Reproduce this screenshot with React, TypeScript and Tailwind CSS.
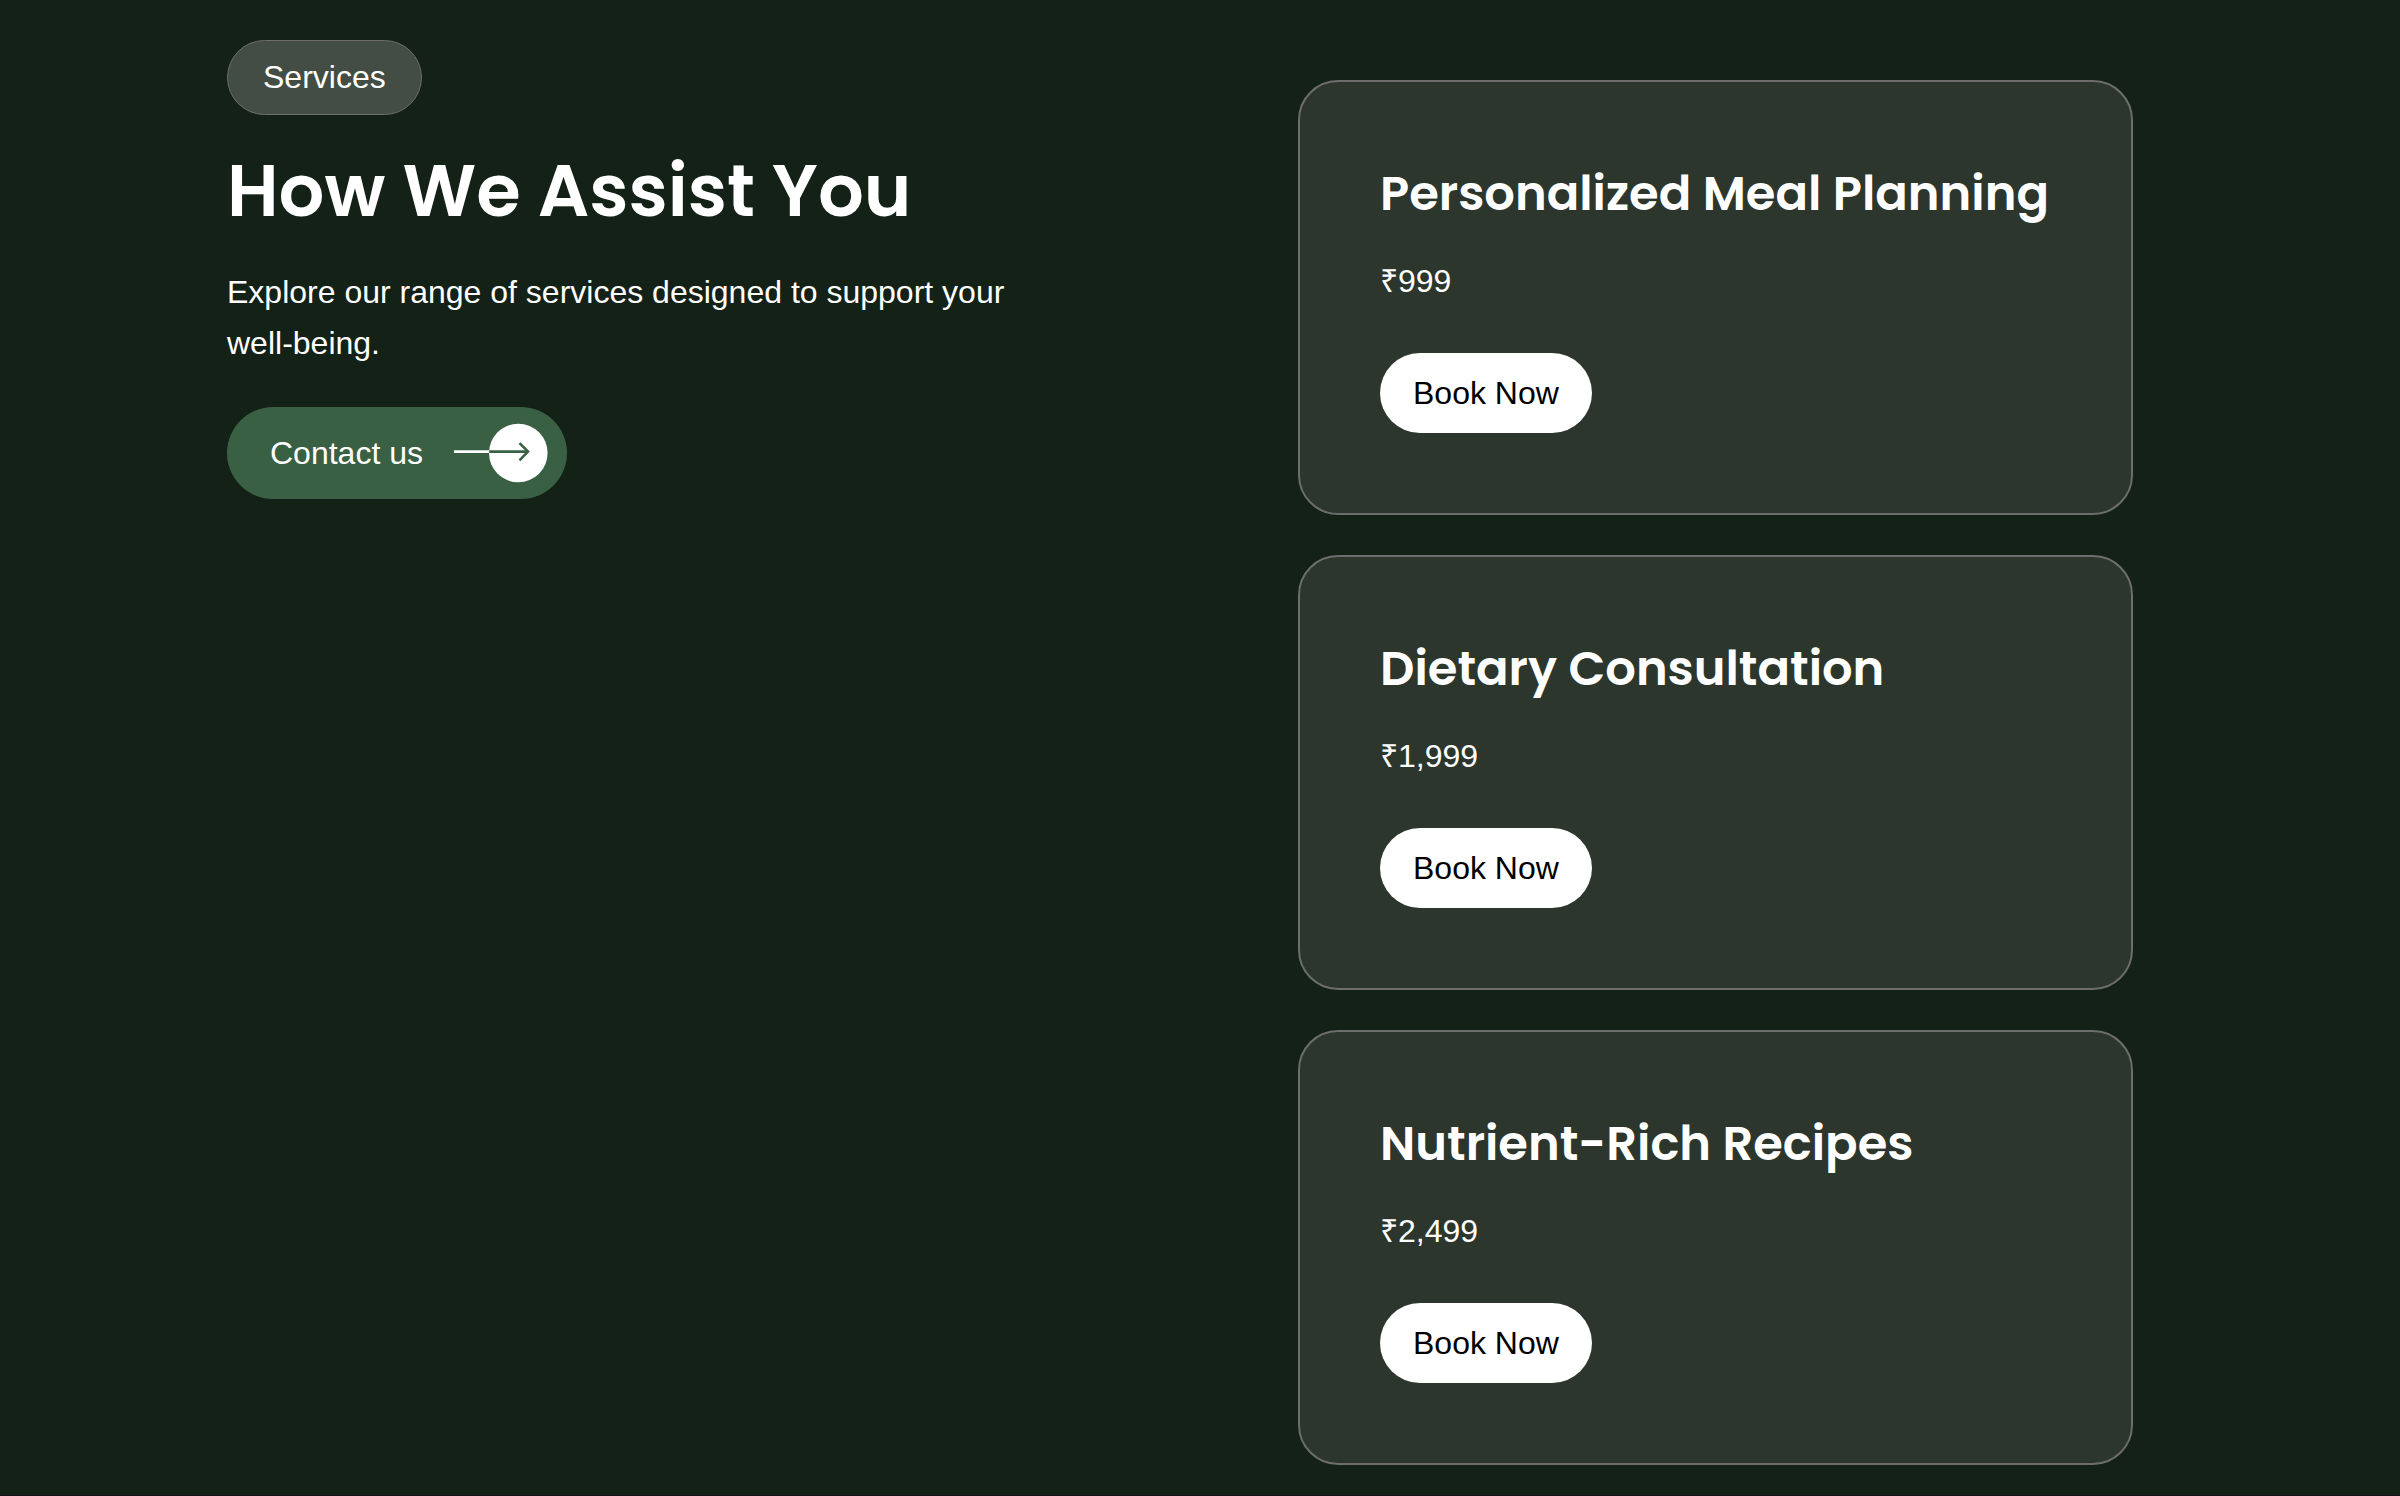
type Service = { name: string; price: string };

const services: Service[] = [
  { name: "Personalized Meal Planning", price: "₹999" },
  { name: "Dietary Consultation", price: "₹1,999" },
  { name: "Nutrient-Rich Recipes", price: "₹2,499" },
];

function ArrowBadge() {
  return (
    <svg width="94" height="60" viewBox="0 0 94 60" fill="none" aria-hidden="true">
      <circle cx="64.3" cy="30" r="29.3" fill="#fff" />
      <path d="M0 28.6H35.2" stroke="#fff" strokeWidth="2.6" />
      <path d="M35.2 28.6H74" stroke="#3a6043" strokeWidth="2.6" />
      <path d="M65.5 20.2L74 28.6L65.5 37.3" stroke="#3a6043" strokeWidth="2.6" />
    </svg>
  );
}

function ServiceCard({ name, price }: Service) {
  return (
    <article className="flex flex-col items-start rounded-[40px] border-2 border-[#6d6d6c] bg-[#2c362d] p-20">
      <h3 className="font-['Poppins','Inter',sans-serif] text-[48px] leading-[64px] font-semibold">{name}</h3>
      <p className="mt-[30px] text-[32px] leading-[51px]">{price}</p>
      <button type="button" className="mt-[46px] h-20 rounded-[40px] bg-white px-[33px] text-[32px] text-black">
        Book Now
      </button>
    </article>
  );
}

export default function App() {
  return (
    <main className="min-h-screen border-b border-[#111315] bg-[#132117] pt-10 pr-[267px] pb-7 pl-[227px] font-['Liberation_Sans',Arial,sans-serif] text-white">
      <section className="grid grid-cols-2 items-start gap-[236px]">
        <div className="flex flex-col items-start">
          <span className="rounded-[38px] border border-[#6d6d6c] bg-[#444d44] px-[35px] py-[11px] text-[32px] leading-[51px]">
            Services
          </span>
          <h2 className="mt-8 font-['Poppins','Inter',sans-serif] text-[72px] leading-[88px] font-semibold whitespace-nowrap">
            How We Assist You
          </h2>
          <p className="mt-8 text-[32px] leading-[51px]">
            Explore our range of services designed to support your well-being.
          </p>
          <a
            href="#contact"
            className="mt-[38px] flex items-center gap-[31px] rounded-[46px] bg-[#3a6043] py-4 pr-[19px] pl-[43px] text-[32px] leading-[51px]"
          >
            Contact us
            <ArrowBadge />
          </a>
        </div>
        <div className="flex flex-col gap-10 pt-10">
          {services.map((service) => (
            <ServiceCard key={service.name} {...service} />
          ))}
        </div>
      </section>
    </main>
  );
}
